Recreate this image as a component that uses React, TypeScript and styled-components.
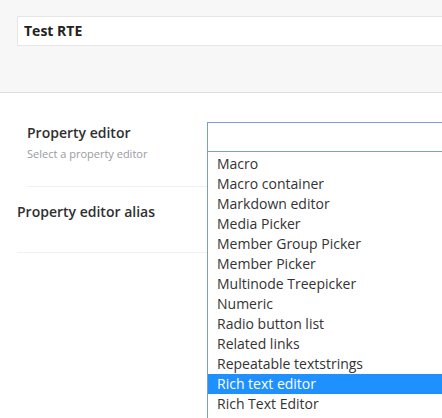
import React from "react";
import styled, { createGlobalStyle } from "styled-components";

const editors = [
  "Macro",
  "Macro container",
  "Markdown editor",
  "Media Picker",
  "Member Group Picker",
  "Member Picker",
  "Multinode Treepicker",
  "Numeric",
  "Radio button list",
  "Related links",
  "Repeatable textstrings",
  "Rich text editor",
  "Rich Text Editor",
];

export default function App() {
  return (
    <Page>
      <GlobalStyle />
      <Header>
        <NameInput>Test RTE</NameInput>
      </Header>

      <Form>
        <Group>
          <Row>
            <LabelWrap>
              <Label>Property editor</Label>
              <Description>Select a property editor</Description>
            </LabelWrap>
            <Control>
              <SelectBox />
              <ListBox>
                {editors.map((item) => (
                  <Option key={item} selected={item === "Rich text editor"}>
                    {item}
                  </Option>
                ))}
              </ListBox>
            </Control>
          </Row>
        </Group>
        <AliasRow>
          <Label>Property editor alias</Label>
        </AliasRow>
      </Form>
    </Page>
  );
}

const GlobalStyle = createGlobalStyle`
  body {
    margin: 0;
    font-family: "Open Sans", "Noto Sans", sans-serif;
    background: #fff;
  }
`;

const Page = styled.div`
  height: 418px;
  overflow: hidden;
`;

const Header = styled.div`
  height: 76px;
  padding: 16px 0 0 17px;
  background-color: #f7f7f7;
  border-bottom: 1px solid #dcdcdc;
`;

const NameInput = styled.div`
  box-sizing: border-box;
  height: 30px;
  margin-right: -20px;
  padding-left: 6px;
  background: #fff;
  border: 1px solid #e6e6e6;
  font-size: 14px;
  font-weight: 700;
  line-height: 28px;
  color: #222;
`;

const Form = styled.div`
  padding-left: 17px;
`;

const Group = styled.div`
  padding-left: 10px;
`;

const Row = styled.div`
  display: flex;
  padding: 29px 0 24px;
  border-bottom: 1px solid #f0f0f0;
`;

const LabelWrap = styled.div`
  width: 180px;
  flex-shrink: 0;
  padding-top: 1px;
`;

const Label = styled.div`
  font-size: 14px;
  font-weight: 600;
  line-height: 20px;
  color: #2f2f2f;
`;

const Description = styled.div`
  margin-top: 3px;
  font-size: 11px;
  line-height: 16px;
  color: #9a9aa2;
`;

const Control = styled.div`
  position: relative;
  flex: 1;
`;

const SelectBox = styled.div`
  box-sizing: border-box;
  height: 30px;
  margin-right: -20px;
  background: #fff;
  border: 1px solid #7b9ddb;
`;

const ListBox = styled.div`
  position: absolute;
  top: 30px;
  left: 0;
  right: -20px;
  height: 300px;
  z-index: 2;
  padding-top: 2px;
  background: #fff;
  border-left: 1px solid #7f9dc9;
`;

const Option = styled.div<{ selected?: boolean }>`
  height: 20px;
  padding-left: 9px;
  font-size: 14px;
  line-height: 20px;
  white-space: nowrap;
  color: ${(props) => (props.selected ? "#fff" : "#333")};
  background: ${(props) => (props.selected ? "#1e90ff" : "transparent")};
`;

const AliasRow = styled.div`
  padding: 15px 0 30px;
  border-bottom: 1px solid #f0f0f0;
`;
